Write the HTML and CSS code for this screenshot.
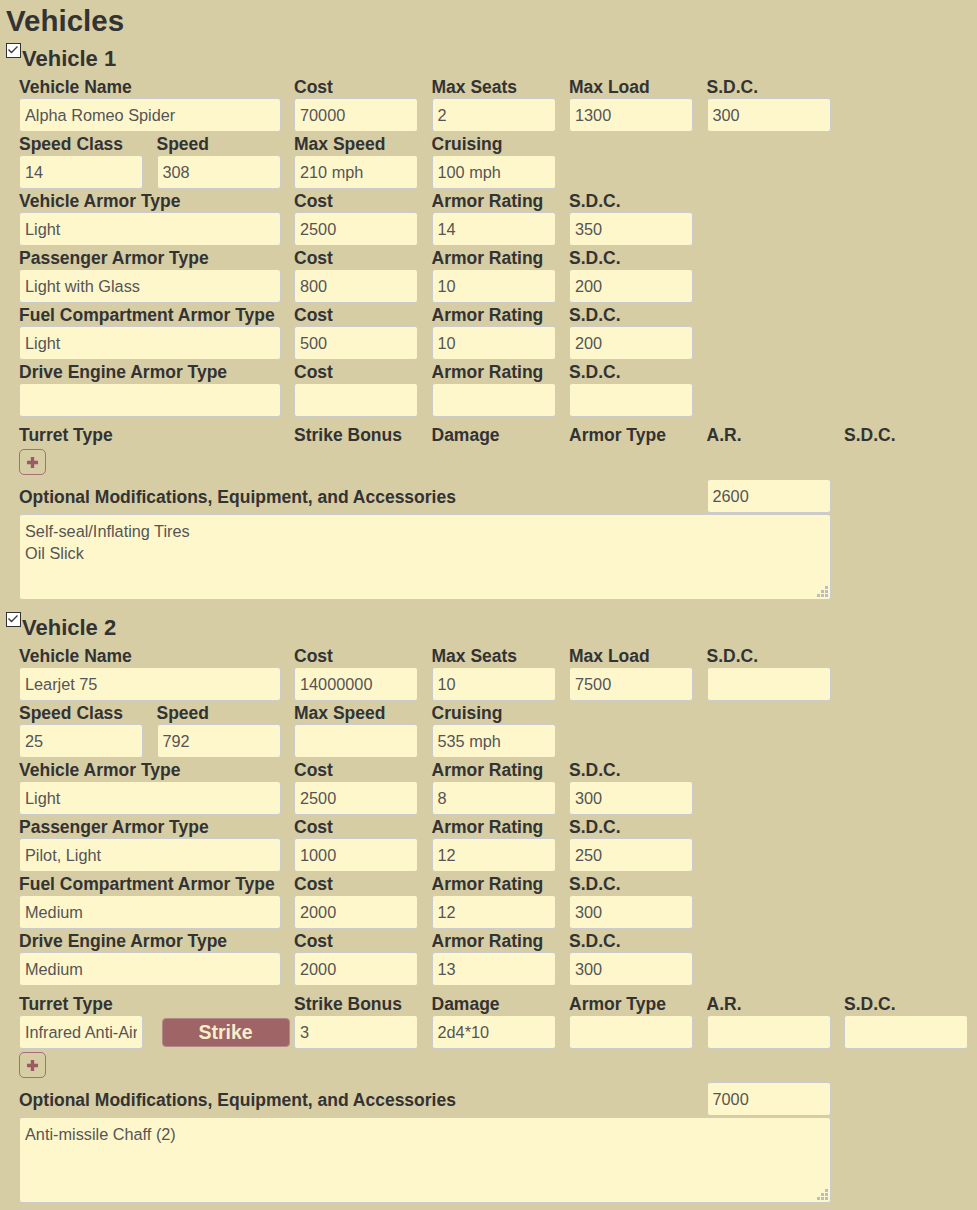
FILE: index.html
```html
<!DOCTYPE html>
<html>
<head>
<meta charset="utf-8">
<title>Vehicles</title>
<link rel="stylesheet" href="styles.css">
</head>
<body>
<h1 class="page-title">Vehicles</h1>

<section class="vehicle">
  <div class="vhead">
    <span class="check"><svg width="13" height="13" viewBox="0 0 13 13"><path d="M1.5 5.5 L4.5 8.5 L10.5 2.5" fill="none" stroke="#3a3a3a" stroke-width="1.4"/></svg></span>
    <span class="vtitle">Vehicle 1</span>
  </div>
  <div class="vbody">
    <div class="grid">
      <div class="field span2"><div class="lbl">Vehicle Name</div><input class="f" value="Alpha Romeo Spider"></div>
      <div class="field"><div class="lbl">Cost</div><input class="f" value="70000"></div>
      <div class="field"><div class="lbl">Max Seats</div><input class="f" value="2"></div>
      <div class="field"><div class="lbl">Max Load</div><input class="f" value="1300"></div>
      <div class="field"><div class="lbl">S.D.C.</div><input class="f" value="300"></div>
    </div>
    <div class="grid">
      <div class="field"><div class="lbl">Speed Class</div><input class="f" value="14"></div>
      <div class="field"><div class="lbl">Speed</div><input class="f" value="308"></div>
      <div class="field"><div class="lbl">Max Speed</div><input class="f" value="210 mph"></div>
      <div class="field"><div class="lbl">Cruising</div><input class="f" value="100 mph"></div>
    </div>
    <div class="grid">
      <div class="field span2"><div class="lbl">Vehicle Armor Type</div><input class="f" value="Light"></div>
      <div class="field"><div class="lbl">Cost</div><input class="f" value="2500"></div>
      <div class="field"><div class="lbl">Armor Rating</div><input class="f" value="14"></div>
      <div class="field"><div class="lbl">S.D.C.</div><input class="f" value="350"></div>
    </div>
    <div class="grid">
      <div class="field span2"><div class="lbl">Passenger Armor Type</div><input class="f" value="Light with Glass"></div>
      <div class="field"><div class="lbl">Cost</div><input class="f" value="800"></div>
      <div class="field"><div class="lbl">Armor Rating</div><input class="f" value="10"></div>
      <div class="field"><div class="lbl">S.D.C.</div><input class="f" value="200"></div>
    </div>
    <div class="grid">
      <div class="field span2"><div class="lbl">Fuel Compartment Armor Type</div><input class="f" value="Light"></div>
      <div class="field"><div class="lbl">Cost</div><input class="f" value="500"></div>
      <div class="field"><div class="lbl">Armor Rating</div><input class="f" value="10"></div>
      <div class="field"><div class="lbl">S.D.C.</div><input class="f" value="200"></div>
    </div>
    <div class="grid">
      <div class="field span2"><div class="lbl">Drive Engine Armor Type</div><input class="f" value=""></div>
      <div class="field"><div class="lbl">Cost</div><input class="f" value=""></div>
      <div class="field"><div class="lbl">Armor Rating</div><input class="f" value=""></div>
      <div class="field"><div class="lbl">S.D.C.</div><input class="f" value=""></div>
    </div>

    <div class="grid turret-head">
      <div class="lbl c1">Turret Type</div>
      <div class="lbl c3">Strike Bonus</div>
      <div class="lbl c4">Damage</div>
      <div class="lbl c5">Armor Type</div>
      <div class="lbl c6">A.R.</div>
      <div class="lbl c7">S.D.C.</div>
    </div>
    <div class="add"><svg class="plus" width="13" height="13" viewBox="0 0 13 13"><path d="M6.5 1 V12 M1 6.5 H12" stroke="#9b5a64" stroke-width="3.4"/></svg></div>

    <div class="grid opt-row">
      <div class="lbl opt-lbl">Optional Modifications, Equipment, and Accessories</div>
      <input class="f c6" value="2600">
    </div>
    <div class="grid">
      <div class="ta-wrap">
        <textarea class="ta">Self-seal/Inflating Tires
Oil Slick</textarea>
        <svg class="grip" width="11" height="11" viewBox="0 0 11 11"><g fill="#bdbdbd"><rect x="8" y="0" width="3" height="3"/><rect x="4" y="4" width="3" height="3"/><rect x="8" y="4" width="3" height="3"/><rect x="0" y="8" width="3" height="3"/><rect x="4" y="8" width="3" height="3"/><rect x="8" y="8" width="3" height="3"/></g></svg>
      </div>
    </div>
  </div>
</section>

<section class="vehicle">
  <div class="vhead">
    <span class="check"><svg width="13" height="13" viewBox="0 0 13 13"><path d="M1.5 5.5 L4.5 8.5 L10.5 2.5" fill="none" stroke="#3a3a3a" stroke-width="1.4"/></svg></span>
    <span class="vtitle">Vehicle 2</span>
  </div>
  <div class="vbody">
    <div class="grid">
      <div class="field span2"><div class="lbl">Vehicle Name</div><input class="f" value="Learjet 75"></div>
      <div class="field"><div class="lbl">Cost</div><input class="f" value="14000000"></div>
      <div class="field"><div class="lbl">Max Seats</div><input class="f" value="10"></div>
      <div class="field"><div class="lbl">Max Load</div><input class="f" value="7500"></div>
      <div class="field"><div class="lbl">S.D.C.</div><input class="f" value=""></div>
    </div>
    <div class="grid">
      <div class="field"><div class="lbl">Speed Class</div><input class="f" value="25"></div>
      <div class="field"><div class="lbl">Speed</div><input class="f" value="792"></div>
      <div class="field"><div class="lbl">Max Speed</div><input class="f" value=""></div>
      <div class="field"><div class="lbl">Cruising</div><input class="f" value="535 mph"></div>
    </div>
    <div class="grid">
      <div class="field span2"><div class="lbl">Vehicle Armor Type</div><input class="f" value="Light"></div>
      <div class="field"><div class="lbl">Cost</div><input class="f" value="2500"></div>
      <div class="field"><div class="lbl">Armor Rating</div><input class="f" value="8"></div>
      <div class="field"><div class="lbl">S.D.C.</div><input class="f" value="300"></div>
    </div>
    <div class="grid">
      <div class="field span2"><div class="lbl">Passenger Armor Type</div><input class="f" value="Pilot, Light"></div>
      <div class="field"><div class="lbl">Cost</div><input class="f" value="1000"></div>
      <div class="field"><div class="lbl">Armor Rating</div><input class="f" value="12"></div>
      <div class="field"><div class="lbl">S.D.C.</div><input class="f" value="250"></div>
    </div>
    <div class="grid">
      <div class="field span2"><div class="lbl">Fuel Compartment Armor Type</div><input class="f" value="Medium"></div>
      <div class="field"><div class="lbl">Cost</div><input class="f" value="2000"></div>
      <div class="field"><div class="lbl">Armor Rating</div><input class="f" value="12"></div>
      <div class="field"><div class="lbl">S.D.C.</div><input class="f" value="300"></div>
    </div>
    <div class="grid">
      <div class="field span2"><div class="lbl">Drive Engine Armor Type</div><input class="f" value="Medium"></div>
      <div class="field"><div class="lbl">Cost</div><input class="f" value="2000"></div>
      <div class="field"><div class="lbl">Armor Rating</div><input class="f" value="13"></div>
      <div class="field"><div class="lbl">S.D.C.</div><input class="f" value="300"></div>
    </div>

    <div class="grid turret-head">
      <div class="lbl c1">Turret Type</div>
      <div class="lbl c3">Strike Bonus</div>
      <div class="lbl c4">Damage</div>
      <div class="lbl c5">Armor Type</div>
      <div class="lbl c6">A.R.</div>
      <div class="lbl c7">S.D.C.</div>
    </div>
    <div class="grid turret-row">
      <input class="f c1" value="Infrared Anti-Air">
      <button class="strike c2">Strike</button>
      <input class="f c3" value="3">
      <input class="f c4" value="2d4*10">
      <input class="f c5" value="">
      <input class="f c6" value="">
      <input class="f c7" value="">
    </div>
    <div class="add"><svg class="plus" width="13" height="13" viewBox="0 0 13 13"><path d="M6.5 1 V12 M1 6.5 H12" stroke="#9b5a64" stroke-width="3.4"/></svg></div>

    <div class="grid opt-row">
      <div class="lbl opt-lbl">Optional Modifications, Equipment, and Accessories</div>
      <input class="f c6" value="7000">
    </div>
    <div class="grid">
      <div class="ta-wrap">
        <textarea class="ta">Anti-missile Chaff (2)</textarea>
        <svg class="grip" width="11" height="11" viewBox="0 0 11 11"><g fill="#bdbdbd"><rect x="8" y="0" width="3" height="3"/><rect x="4" y="4" width="3" height="3"/><rect x="8" y="4" width="3" height="3"/><rect x="0" y="8" width="3" height="3"/><rect x="4" y="8" width="3" height="3"/><rect x="8" y="8" width="3" height="3"/></g></svg>
      </div>
    </div>
  </div>
</section>
</body>
</html>
```

FILE: styles.css
```css
html, body {
  background: #d6cda4;
}
body {
  margin: 0;
  padding: 4px 6px 0 6px;
  font-family: "Liberation Sans", Arial, sans-serif;
  color: #333;
}
.page-title {
  margin: 0;
  padding-top: 1px;
  height: 32px;
  box-sizing: border-box;
  font-size: 29.5px;
  line-height: 31px;
  font-weight: bold;
}
.vehicle {
  padding-bottom: 5px;
}
.vhead {
  display: flex;
  align-items: flex-start;
  height: 39px;
}
.check {
  display: block;
  width: 15px;
  height: 15px;
  margin-top: 7px;
  box-sizing: border-box;
  border: 1px solid #333;
  background: #fff;
}
.check svg {
  display: block;
}
.vtitle {
  margin: 10px 0 0 1px;
  font-size: 22px;
  line-height: 26px;
  font-weight: bold;
}
.vbody {
  padding-left: 13px;
}
.grid {
  display: grid;
  grid-template-columns: repeat(7, 124px);
  column-gap: 13.5px;
}
.field {
  display: flex;
  flex-direction: column;
}
.span2 {
  grid-column: span 2;
}
.lbl {
  height: 23px;
  box-sizing: border-box;
  padding-top: 1px;
  font-size: 17.5px;
  font-weight: bold;
  line-height: 22px;
  white-space: nowrap;
}
.f {
  display: block;
  width: 100%;
  height: 34px;
  box-sizing: border-box;
  margin: 0;
  padding: 0 5px;
  border: 1px solid #cbcbcb;
  border-radius: 3px;
  background: #fff7cc;
  font-family: "Liberation Sans", Arial, sans-serif;
  font-size: 16.3px;
  color: #555;
  outline: none;
}
.c1 { grid-column: 1; }
.c2 { grid-column: 2; }
.c3 { grid-column: 3; }
.c4 { grid-column: 4; }
.c5 { grid-column: 5; }
.c6 { grid-column: 6; }
.c7 { grid-column: 7; }
.turret-head {
  margin-top: 6px;
}
.turret-head .lbl,
.turret-row > * {
  grid-row: 1;
}
.strike {
  justify-self: start;
  align-self: center;
  width: 128px;
  height: 29px;
  margin: 0 0 0 5px;
  padding: 0;
  border: 1px solid #b08a8a;
  border-radius: 4px;
  background: #9e6466;
  color: #f8eec8;
  font-family: "Liberation Sans", Arial, sans-serif;
  font-size: 19.5px;
  font-weight: bold;
}
.add {
  display: flex;
  align-items: center;
  justify-content: center;
  width: 27px;
  height: 26px;
  box-sizing: border-box;
  margin: 3px 0 0 0;
  border: 1px solid #a56f75;
  border-radius: 5px;
}
.plus {
  display: block;
  flex: none;
  width: 13px;
  height: 13px;
}
.opt-row {
  margin-top: 4px;
  align-items: center;
}
.opt-row > * {
  grid-row: 1;
}
.opt-lbl {
  grid-column: 1 / span 5;
}
.ta-wrap {
  position: relative;
  grid-column: 1 / span 6;
  margin-top: 1px;
  height: 86px;
}
.ta {
  display: block;
  width: 100%;
  height: 86px;
  box-sizing: border-box;
  margin: 0;
  padding: 5px 5px;
  border: 1px solid #cbcbcb;
  border-radius: 3px;
  background: #fff7cc;
  font-family: "Liberation Sans", Arial, sans-serif;
  font-size: 16.3px;
  line-height: 22px;
  color: #555;
  resize: none;
  outline: none;
}
.grip {
  position: absolute;
  right: 3px;
  bottom: 3px;
}
```
